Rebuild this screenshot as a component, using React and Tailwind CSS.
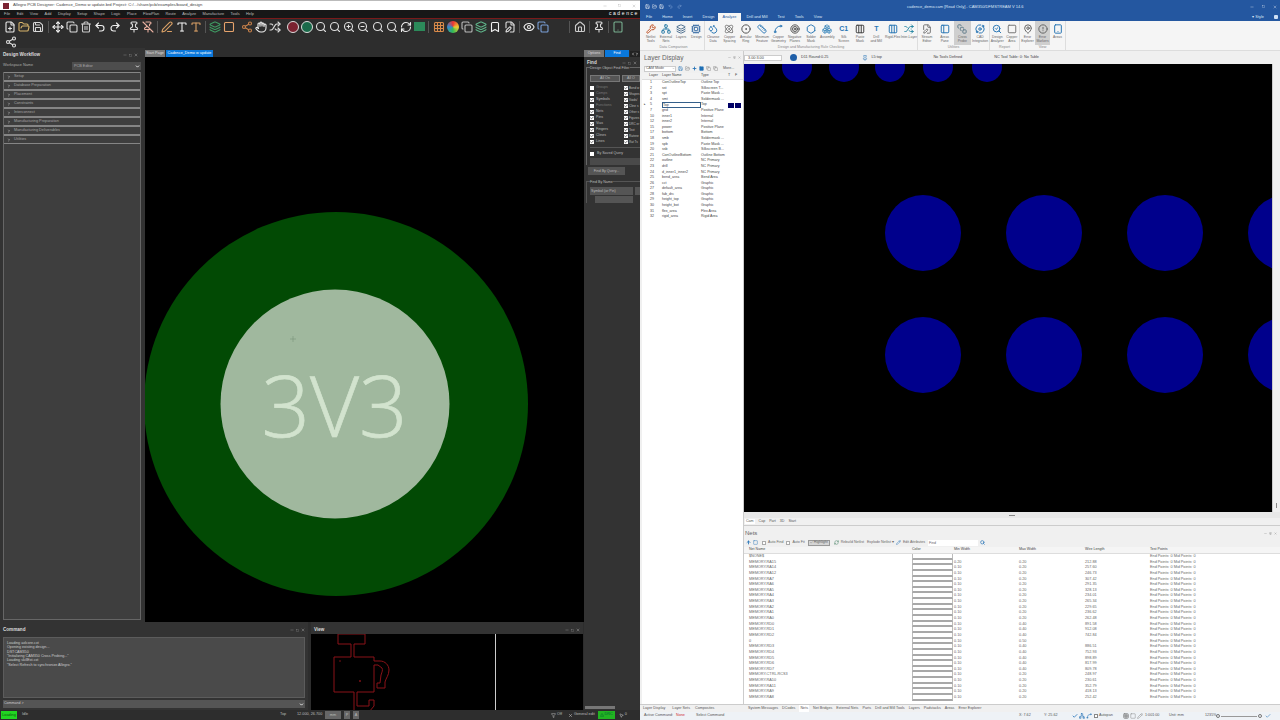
import React from 'react';
import {
  FilePlus, FolderOpen, Save, Move, Copy, Trash2, Undo2, Redo2, Pin, PinOff, PenLine, Type, Share2, Hand,
  ZoomIn, ZoomOut, Search, RefreshCw, Grid3x3, Eye, Home, ChevronRight, ChevronDown, ChevronLeft, X, Minus, Square, Layers, Plus,
  Wrench, Network, Cpu, Droplets, Atom, CircleDot, Ruler, Spline, Target, Hexagon, Boxes, Columns3, Shuffle, FilePen,
  PanelLeft, Orbit, SearchCheck, SquareStack, MapPin, CircleAlert, Tablet, Filter, Check, ArrowUp, Pencil, MousePointer2, TriangleAlert,
  Bookmark,
} from 'lucide-react';

const workflow = ['Setup', 'Database Preparation', 'Placement', 'Constraints', 'Interconnect', 'Manufacturing Preparation', 'Manufacturing Deliverables', 'Utilities'];
const menus = ['File', 'Edit', 'View', 'Add', 'Display', 'Setup', 'Shape', 'Logic', 'Place', 'FlowPlan', 'Route', 'Analyze', 'Manufacture', 'Tools', 'Help'];
const findLeft = [['Groups', 0], ['Comps', 0], ['Symbols', 1], ['Functions', 0], ['Nets', 1], ['Pins', 1], ['Vias', 1], ['Fingers', 1], ['Clines', 1], ['Lines', 1]];
const findRight = ['Bond w', 'Shapes', 'Voids/', 'Cline s', 'Other s', 'Figures', 'DRC er', 'Text', 'Ratsne', 'Rat Ts'];
const commandLog = ['Loading axlcore.cxt', 'Opening existing design...', 'DSTCAM350', '"Initializing CAM350 Cross Probing..."', 'Loading skillExt.cxt', '"Select Refresh to synchronize Allegro."'];
const layers = [
  ['1', 'ConOutlineTop', 'Outline Top'], ['2', 'sst', 'Silkscreen T...'], ['3', 'spt', 'Paste Mask ...'], ['4', 'smt', 'Soldermask ...'],
  ['5', 'Top', 'Top'], ['7', 'gnd', 'Positive Plane'], ['10', 'inner1', 'Internal'], ['12', 'inner2', 'Internal'],
  ['15', 'power', 'Positive Plane'], ['17', 'bottom', 'Bottom'], ['18', 'smb', 'Soldermask ...'], ['19', 'spb', 'Paste Mask ...'],
  ['20', 'ssb', 'Silkscreen B...'], ['21', 'ConOutlineBottom', 'Outline Bottom'], ['22', 'outline', 'NC Primary'], ['23', 'drill', 'NC Primary'],
  ['24', 'd_inner1_inner2', 'NC Primary'], ['25', 'bend_area', 'Bend Area'], ['26', 'cct', 'Graphic'], ['27', 'default_area', 'Graphic'],
  ['28', 'fab_drc', 'Graphic'], ['29', 'height_top', 'Graphic'], ['30', 'height_bot', 'Graphic'], ['31', 'flex_area', 'Flex Area'], ['32', 'rigid_area', 'Rigid Area'],
];
const nets = [
  ['$NONE$', '', '', ''], ['MEMORY.RA15', '0.20', '0.20', '212.88'], ['MEMORY.RA14', '0.10', '0.20', '257.60'], ['MEMORY.RA12', '0.10', '0.20', '246.73'],
  ['MEMORY.RA7', '0.10', '0.20', '307.42'], ['MEMORY.RA6', '0.10', '0.20', '291.35'], ['MEMORY.RA5', '0.10', '0.20', '328.13'], ['MEMORY.RA4', '0.10', '0.20', '234.01'],
  ['MEMORY.RA3', '0.10', '0.20', '265.34'], ['MEMORY.RA2', '0.10', '0.20', '229.65'], ['MEMORY.RA1', '0.10', '0.20', '236.62'], ['MEMORY.RA0', '0.10', '0.20', '262.48'],
  ['MEMORY.RD0', '0.10', '0.40', '891.58'], ['MEMORY.RD1', '0.10', '0.40', '912.08'], ['MEMORY.RD2', '0.10', '0.40', '742.84'], ['0', '0.10', '0.50', ''],
  ['MEMORY.RD3', '0.10', '0.40', '886.51'], ['MEMORY.RD4', '0.10', '0.40', '752.93'], ['MEMORY.RD5', '0.10', '0.40', '898.89'], ['MEMORY.RD6', '0.10', '0.40', '817.99'],
  ['MEMORY.RD7', '0.10', '0.40', '809.78'], ['MEMORY.CTRL.RCS3', '0.10', '0.20', '248.97'], ['MEMORY.RA10', '0.10', '0.20', '230.61'], ['MEMORY.RA11', '0.10', '0.20', '352.79'],
  ['MEMORY.RA9', '0.10', '0.20', '418.13'], ['MEMORY.RA8', '0.10', '0.20', '252.42'],
];
const ribbonTabs = ['File', 'Home', 'Insert', 'Design', 'Analyze', 'Drill and Mill', 'Test', 'Tools', 'View'];
const ribbonGroups = [
  { name: 'Data Comparison', w: 'w-[62px]', items: [[Wrench, '#c0562a', 'Netlist', 'Tools'], [Network, '#2f7fa8', 'External', 'Nets'], [Layers, '#4d6f8f', 'Layers', ''], [Cpu, '#3d6fa5', 'Design', '']] },
  { name: 'Design and Manufacturing Rule Checking', w: 'w-[213px]', items: [[Droplets, '#2c78b5', 'Cleanse', 'Data'], [Atom, '#7a7a7a', 'Copper', 'Spacing'], [CircleDot, '#555', 'Annular', 'Ring'], [Ruler, '#2c78b5', 'Minimum', 'Feature'], [Spline, '#2c78b5', 'Copper', 'Geometry'], [Target, '#555', 'Negative', 'Planes'], [Hexagon, '#2c78b5', 'Solder', 'Mask'], [Boxes, '#4a90c0', 'Assembly', ''], ['C1', '#2c78b5', 'Silk', 'Screen'], [Columns3, '#444', 'Paste', 'Mask'], ['T', '#555', 'Drill', 'and Mill'], [Columns3, '#2c78b5', 'Rigid-Flex', ''], [Shuffle, '#2c8aa5', 'Inter-Layer', '']] },
  { name: 'Utilities', w: 'w-[72px]', items: [[FilePen, '#777', 'Stream', 'Editor'], [PanelLeft, '#2c78b5', 'Areas', 'Pane'], [SquareStack, '#607d8b', 'Cross', 'Probe', true], [Orbit, '#2c78b5', 'CAD', 'Integration']] },
  { name: 'Report', w: 'w-[30px]', items: [[SearchCheck, '#2c78b5', 'Design', 'Analyzer'], [Square, '#777', 'Copper', 'Area']] },
  { name: 'View', w: 'w-[46px]', items: [[MapPin, '#666', 'Error', 'Explorer'], [CircleAlert, '#666', 'Error', 'Markers', true], [Tablet, '#2c78b5', 'Areas', '']] },
];
const statusTabs = ['System Messages', 'DCodes', 'Nets', 'Net Bridges', 'External Nets', 'Parts', 'Drill and Mill Tools', 'Layers', 'Padstacks', 'Areas', 'Error Explorer'];

function Tool({ icon: Icon, color = '#e5e5e5' }) {
  return <Icon size={12} color={color} strokeWidth={2.2} className="shrink-0" />;
}

function Sep() {
  return <div className="w-px h-3 bg-[#555] shrink-0 mx-[1px]" />;
}

function PaneHead({ title }) {
  return (
    <div className="flex items-center h-[8px] px-[3px] text-[4.6px] font-bold text-[#ddd] shrink-0">
      <span className="flex-1">{title}</span>
      <Minus size={4} color="#aaa" />
      <Square size={3} color="#aaa" className="mx-[2px]" />
      <X size={4} color="#ccc" />
    </div>
  );
}

function LeftToolbar() {
  const zoomIcons = [Search, Search, ZoomIn, ZoomOut, Search, Search];
  return (
    <div className="h-[29px] bg-[#2d2d2d] shrink-0 pl-[4px]">
      <div className="flex items-center gap-[2.2px] h-[15px]">
        <Tool icon={FilePlus} color="#e9e9e9" />
        <Tool icon={FolderOpen} color="#d7b36a" />
        <Tool icon={Save} color="#d8d8d8" />
        <Sep />
        <Tool icon={Move} color="#eee" />
        <Tool icon={Copy} color="#ddd" />
        <Tool icon={Trash2} color="#ccc" />
        <Tool icon={Undo2} color="#eee" />
        <Tool icon={Redo2} color="#eee" />
        <div className="w-[3px] shrink-0" />
        <Tool icon={Pin} color="#ddd" />
        <Tool icon={PinOff} color="#e8b0a0" />
        <Sep />
        <Tool icon={PenLine} color="#d9a066" />
        <Tool icon={Type} color="#eee" />
        <Tool icon={Type} color="#d9a066" />
        <Sep />
        <Tool icon={Layers} color="#3f9a62" />
        <Tool icon={Square} color="#e6a36c" />
        <div className="w-[1px] shrink-0" />
        <Tool icon={Share2} color="#c8814a" />
        <Tool icon={Hand} color="#eee" />
        <Tool icon={Shuffle} color="#ddd" />
        <div className="w-[1px] shrink-0" />
        <div className="w-[12px] h-[12px] rounded-full border border-[#ddd] bg-[#7a2230] shrink-0" />
        <div className="w-[12px] h-[12px] rounded-full border border-[#ddd] bg-[#1a6a4a] shrink-0" />
        {zoomIcons.map((Icon, i) => <Tool key={i} icon={Icon} color="#e0e0e0" />)}
        <Tool icon={RefreshCw} color="#eee" />
        <div className="w-[11px] h-[9px] bg-[#2c8a5a] shrink-0" />
        <Sep />
        <Tool icon={Grid3x3} color="#d98a4a" />
        <div className="w-[12px] h-[12px] rounded-full bg-[conic-gradient(#e33,#ec3,#3b5,#38c,#e33)] shrink-0" />
        <Tool icon={Copy} color="#bbb" />
        <Tool icon={Layers} color="#5fb48a" />
        <Tool icon={Bookmark} color="#eee" />
        <Tool icon={FilePen} color="#ddd" />
        <Sep />
        <Tool icon={Eye} color="#eee" />
        <Tool icon={Copy} color="#7aa0d8" />
        <div className="w-[15px] shrink-0" />
        <Sep />
        <Tool icon={Home} color="#ccc" />
        <Sep />
        <Tool icon={Pin} color="#ddd" />
        <Sep />
        <Tool icon={Tablet} color="#78b090" />
      </div>
      <div className="pt-[2px] pl-[1px]"><Tool icon={Share2} color="#ddd" /></div>
    </div>
  );
}

function FindCheck({ name, on, tight }) {
  return (
    <div className={`flex items-center h-[6px] whitespace-nowrap ${tight ? 'gap-[1px] text-[3.1px]' : 'gap-[2px]'}`}>
      <span className="w-[4px] h-[4px] bg-white shrink-0 flex items-center justify-center">
        {on ? <Check size={4} color="#222" strokeWidth={4} /> : null}
      </span>
      <span className={on ? '' : 'text-[#777]'}>{name}</span>
    </div>
  );
}

function FindPanel() {
  return (
    <div className="w-[56px] bg-[#333] text-[3.6px] text-[#bbb] flex flex-col shrink-0 overflow-hidden">
      <div className="flex h-[9px] text-[3.6px] items-end pt-[2px] shrink-0 bg-[#2d2d2d]">
        <span className="w-[20px] h-[7px] bg-[#777] text-[#ddd] text-center leading-[7px]">Options</span>
        <span className="w-[24px] h-[7px] bg-[#0a78dc] text-white text-center leading-[7px] ml-[1px]">Find</span>
        <span className="w-[10px] h-[6px] bg-[#222] ml-[1px] flex items-center justify-center">
          <ChevronLeft size={4} color="#ddd" strokeWidth={4} />
          <ChevronRight size={4} color="#ddd" strokeWidth={4} />
        </span>
      </div>
      <div className="h-[2px] shrink-0" />
      <PaneHead title="Find" />
      <div className="ml-[2px] border-l border-t border-[#666] pl-[3px] pb-[2px] h-[98px] shrink-0">
        <div className="-mt-[2px] mb-[5px] leading-[4px] bg-[#333] w-fit">Design Object Find Filter</div>
        <div className="flex gap-[2px] mb-[3px]">
          <div className="w-[30px] h-[7px] bg-[#555] border border-[#777] text-center leading-[5px] shrink-0">All On</div>
          <div className="flex-1 h-[7px] bg-[#555] border border-[#777] text-center leading-[5px]">All O</div>
        </div>
        <div className="flex">
          <div className="w-[34px] shrink-0">
            {findLeft.map(([name, on]) => <FindCheck key={name} name={name} on={on} />)}
          </div>
          <div className="min-w-0">
            {findRight.map((name) => <FindCheck key={name} name={name} on={1} tight />)}
          </div>
        </div>
        <div className="border-t border-[#555] mt-[2px] pt-[3px] flex items-center gap-[3px]">
          <span className="w-[4px] h-[4px] bg-white shrink-0" />
          By Saved Query
        </div>
        <div className="h-[7px] bg-[#4a4a4a] mt-[2px]" />
      </div>
      <div className="w-[37px] h-[8px] bg-[#555] ml-[4px] mt-[2px] text-center leading-[8px] shrink-0">Find By Query...</div>
      <div className="ml-[2px] mt-[6px] border-t border-l border-[#555] pl-[3px] shrink-0">
        <div className="-mt-[2px] mb-[3px] leading-[4px] bg-[#333] w-fit">Find By Name</div>
        <div className="flex gap-[2px]">
          <div className="w-[43px] h-[8px] bg-[#555] leading-[8px] pl-[1px] shrink-0">Symbol (or Pin)</div>
          <div className="flex-1 h-[8px] bg-[#555]" />
        </div>
        <div className="flex mt-[1px] pl-[5px]">
          <div className="w-[38px] h-[7px] bg-[#555] shrink-0" />
        </div>
      </div>
      <div className="flex-1" />
      <div className="h-[3px] w-[30px] bg-[#777] ml-[1px] mb-[1px] shrink-0" />
    </div>
  );
}

function LeftWindow() {
  return (
    <div className="w-[640px] h-[720px] flex flex-col bg-[#2d2d2d] shrink-0 overflow-hidden">
      <div className="h-[10px] bg-white flex items-center px-[3px] gap-[2px] text-[4.2px] text-[#444] shrink-0 border-t border-[#bbb]">
        <div className="w-[6px] h-[6px] bg-[#7b2233] shrink-0" />
        <span className="ml-[2px]">Allegro PCB Designer: Cadence_Demo w update.brd  Project: C:/.../share/pcb/examples/board_design</span>
        <span className="flex-1" />
        <Minus size={4} color="#999" />
        <Square size={3} color="#999" className="mx-[9px]" />
        <X size={4} color="#999" className="mr-[1px]" />
      </div>
      <div className="h-[8px] bg-[#171717] flex items-center pl-[4px] gap-[6.4px] text-[3.9px] text-[#bbb] shrink-0">
        {menus.map((m) => <span key={m}>{m}</span>)}
        <span className="flex-1" />
        <span className="text-[5px] tracking-[1.6px] text-white pr-[1px]">cadence</span>
      </div>
      <div className="h-px bg-[#7a1a1a] shrink-0" />
      <LeftToolbar />
      <div className="flex flex-1 min-h-0">
        <div className="w-[584px] flex flex-col shrink-0">
          <div className="flex h-[574px] shrink-0">
            <div className="w-[145px] flex flex-col shrink-0 pr-[4px] pt-[3px] bg-[#333]">
              <PaneHead title="Design Workflow" />
              <div className="flex items-center h-[11px] text-[3.8px] text-[#aaa] pl-[3px] pt-[3px] shrink-0">
                <span className="w-[69px]">Workspace Name</span>
                <div className="flex-1 h-[8px] bg-[#4d4d4d] pl-[2px] leading-[8px] flex items-center justify-between pr-[1px]">
                  PCB Editor
                  <ChevronDown size={5} color="#fff" strokeWidth={4} />
                </div>
              </div>
              <div className="ml-[3px] mt-[2px] flex-1 flex flex-col border-x border-b border-[#666] bg-[#3e3e3e] mb-[2px]">
                {workflow.map((w) => (
                  <div key={w} className="h-[9px] flex items-center border-t border-b border-[#858585] bg-[#3e3e3e] pl-[3px] gap-[3px] text-[3.8px] text-[#a5a5a5] shrink-0">
                    <ChevronRight size={4} color="#ddd" strokeWidth={3} />
                    {w}
                  </div>
                ))}
              </div>
            </div>
            <div className="flex-1 flex flex-col min-w-0">
              <div className="h-[9px] flex items-end text-[3.8px] shrink-0 bg-[#2d2d2d]">
                <span className="w-[20px] h-[7px] bg-[#777] text-[#ddd] text-center leading-[7px]">Start Page</span>
                <span className="w-[47px] h-[7px] bg-[#0a78dc] text-white text-center leading-[7px] ml-[1px]">Cadence_Demo w update</span>
              </div>
              <svg className="flex-1 min-h-0 w-full bg-black block" viewBox="145 57 439 565" preserveAspectRatio="none">
                <circle cx="336" cy="404" r="192" fill="#024a04" />
                <circle cx="335" cy="404" r="114.5" fill="#a0b89e" />
                <text x="334.5" y="436.5" textAnchor="middle" fontFamily="'Open Sans', sans-serif" fontWeight="300" fontSize="85" fill="#d2e3ce" stroke="#d2e3ce" strokeWidth="0.7">3V3</text>
                <path d="M293 336v6M290 339h6" stroke="#7f9a7f" strokeWidth="0.7" />
              </svg>
            </div>
          </div>
          <div className="flex flex-1 min-h-0 gap-[3px] pr-[1px]">
            <div className="w-[308px] flex flex-col shrink-0 bg-[#333]">
              <div className="h-[4px] shrink-0" />
              <PaneHead title="Command" />
              <div className="mx-[3px] mt-[3px] h-[61px] bg-[#4a4a4a] border border-[#5c5c5c] px-[3px] pt-[3px] text-[3.7px] leading-[4.35px] text-[#ccc] shrink-0">
                {commandLog.map((line) => <div key={line}>{line}</div>)}
              </div>
              <div className="mx-[3px] mt-[2px] h-[8px] bg-[#555] flex items-center justify-between px-[1px] text-[3.6px] text-[#ccc] shrink-0">
                Command &gt;
                <ChevronDown size={5} color="#fff" strokeWidth={4} />
              </div>
            </div>
            <div className="flex-1 flex flex-col min-w-0 bg-[#333]">
              <div className="h-[4px] shrink-0" />
              <PaneHead title="View" />
              <div className="flex-1 min-h-0 bg-black">
                <svg className="w-full h-full block" viewBox="0 0 272 76" preserveAspectRatio="none" fill="none">
                  <path d="M27 0h27v10H43v13h20v4h6c5 0 9 4 9 9 0 5-3 8-4 12v6h-8v-5h3l1-8c1-3 2-5 1-7l-4-3h-4v27H46v14h12v-6h5v6l-5 6H43V58H23V23h17V10H27z" stroke="#8a1218" strokeWidth="1" />
                  <circle cx="29" cy="27" r="0.8" fill="#8a1218" />
                  <circle cx="49" cy="47" r="0.9" fill="#8a1218" />
                  <path d="M184.5 0v76" stroke="#ccc" strokeWidth="1" />
                </svg>
              </div>
            </div>
          </div>
        </div>
        <FindPanel />
      </div>
      <div className="h-[10px] bg-[#2d2d2d] flex items-center text-[3.8px] text-[#bbb] shrink-0 relative">
        <div className="w-[16px] h-[8px] ml-[1px] bg-[#22d622] text-[#0a5a0a] text-center leading-[8px]">Loading</div>
        <span className="ml-[5px] w-[258px]">Idle</span>
        <span className="w-[17px]">Top</span>
        <span className="w-[28px]">12.000, 26.700</span>
        <span className="w-[16px] h-[8px] bg-[#666] text-center leading-[8px]">mm</span>
        <span className="w-[6px] h-[8px] bg-[#666] text-center leading-[8px] ml-[3px]">P</span>
        <span className="w-[6px] h-[8px] bg-[#666] text-center leading-[8px] ml-[3px]">A</span>
        <Filter size={5} color="#ddd" className="ml-[192px]" />
        <span className="ml-[1px]">Off</span>
        <X size={5} color="#ddd" className="ml-[6px]" />
        <span className="ml-[1px]">General edit</span>
        <span className="w-[17px] h-[8px] bg-[#22b422] text-[#063] ml-[3px] flex items-center justify-center gap-[1px]"><TriangleAlert size={4} color="#063" />DRC</span>
        <MousePointer2 size={5} color="#ddd" className="ml-[4px]" />
        <span className="ml-[1px]">0</span>
      </div>
    </div>
  );
}

function RibbonGroup({ group }) {
  return (
    <div className={`${group.w} flex flex-col border-r border-[#ddd] shrink-0`}>
      <div className="flex justify-around flex-1">
        {group.items.map(([Icon, color, l1, l2, active], i) => (
          <div key={i} className={`flex-1 flex flex-col items-center pt-[2px] text-[3.4px] leading-[4.2px] text-[#666] whitespace-nowrap min-w-0 ${active ? 'bg-[#cfcfcf]' : ''}`}>
            <div className="h-[11px] mb-[1px] flex items-center">
              {typeof Icon === 'string'
                ? <span className="text-[7px] font-bold leading-[10px] text-[#2c78b5]">{Icon}</span>
                : <Icon size={10} color={color} strokeWidth={2.4} />}
            </div>
            <span>{l1}</span>
            <span>{l2}</span>
          </div>
        ))}
      </div>
      <div className="h-[5px] text-center text-[3.6px] leading-[5px] text-[#888]">{group.name}</div>
    </div>
  );
}

function LayerPanel() {
  return (
    <div className="w-[102px] bg-white flex flex-col shrink-0 border-r border-[#ccc] overflow-hidden">
      <div className="h-[13px] flex items-center justify-between px-[2px] bg-[#f0f0f0] text-[6.5px] text-[#666] shrink-0">
        Layer Display
        <span className="flex items-center gap-[2px]">
          <Minus size={3} color="#777" />
          <Pin size={3} color="#777" />
          <X size={3} color="#777" />
        </span>
      </div>
      <div className="h-[9px] flex items-center gap-[2px] px-[2px] bg-[#f0f0f0] text-[3.6px] text-[#555] shrink-0">
        <div className="w-[32px] h-[6px] bg-white border border-[#ccc] flex items-center justify-between pl-[1px] shrink-0">CAM Mode<ChevronDown size={3} color="#666" /></div>
        <Save size={5} color="#1f6fb5" />
        <FolderOpen size={5} color="#777" />
        <Plus size={5} color="#1f6fb5" strokeWidth={4} />
        <Square size={5} color="#1f6fb5" fill="#1f6fb5" />
        <Copy size={5} color="#777" />
        <Copy size={5} color="#777" />
        <span className="ml-[3px]">More...</span>
      </div>
      <div className="flex h-[7px] items-end text-[3.6px] leading-[5.6px] text-[#444] bg-[#f2f2f2] border-b border-[#ddd] shrink-0">
        <span className="w-[7px] shrink-0" />
        <span className="w-[13px] shrink-0">Layer</span>
        <span className="w-[39px] shrink-0">Layer Name</span>
        <span className="w-[27px] shrink-0">Type</span>
        <span className="w-[7px] shrink-0">T</span>
        <span>F</span>
      </div>
      {layers.map(([num, name, type]) => {
        const selected = num === '5';
        return (
          <div key={num} className="flex h-[5.6px] items-center text-[3.6px] leading-[5.6px] text-[#444] shrink-0 whitespace-nowrap">
            <span className="w-[7px] shrink-0 pl-[2px] text-[3px]">{selected ? '▸' : ''}</span>
            <span className="w-[13px] shrink-0 pl-[1px]">{num}</span>
            <span className={`w-[39px] shrink-0 ${selected ? 'border border-[#345f8a] leading-[4px]' : ''}`}>{name}</span>
            <span className="w-[27px] shrink-0">{type}</span>
            {selected ? (
              <>
                <span className="w-[6px] h-[5px] bg-[#000066] shrink-0" />
                <span className="w-[6px] h-[5px] bg-[#000066] ml-[1px] shrink-0" />
              </>
            ) : null}
          </div>
        );
      })}
    </div>
  );
}

function CamCanvas() {
  const topRow = [750, 797, 844, 890, 938, 987];
  const bigX = [923, 1044, 1165, 1286];
  const bigY = [233, 355];
  return (
    <div className="h-[448px] flex shrink-0">
      <svg className="flex-1 min-w-0 h-full block bg-black" viewBox="744 64 528 448" preserveAspectRatio="none">
        {topRow.map((x) => <circle key={x} cx={x} cy="67" r="15" fill="#00008c" />)}
        {bigY.map((y) => bigX.map((x) => <circle key={`${x}-${y}`} cx={x} cy={y} r="38" fill="#00008c" />))}
      </svg>
      <div className="w-[8px] bg-[#f0f0f0] border-l border-[#ccc] shrink-0 flex items-end justify-center">
        <div className="w-[1px] h-[5px] bg-[#888] mb-[4px]" />
      </div>
    </div>
  );
}

function NetRow({ net }) {
  const [name, min, max, len] = net;
  return (
    <div className="flex h-[5.65px] items-center text-[3.8px] leading-[5.65px] text-[#666] shrink-0 whitespace-nowrap">
      <span className="w-[168px] pl-[5px] shrink-0">{name}</span>
      <span className="w-[41px] h-full bg-white border-x border-x-[#bbb] border-b-2 border-b-[#a8a8a8] shrink-0" />
      <span className="w-[66px] pl-[1px] shrink-0">{min}</span>
      <span className="w-[66px] shrink-0">{max}</span>
      <span className="w-[65px] shrink-0">{len}</span>
      <span>End Points: 0 Mid Points: 0</span>
    </div>
  );
}

function NetsPanel() {
  return (
    <div className="flex-1 min-h-0 flex flex-col bg-white overflow-hidden">
      <div className="h-[12px] bg-[#f0f0f0] flex items-center justify-between px-[1px] text-[6px] text-[#666] shrink-0 pt-[2px]">
        Nets
        <span className="flex items-center gap-[2px] pr-[2px]">
          <Minus size={3} color="#777" />
          <Pin size={3} color="#777" />
          <X size={3} color="#777" />
        </span>
      </div>
      <div className="h-[9px] bg-[#f0f0f0] flex items-center px-[2px] gap-[2px] text-[3.6px] text-[#666] shrink-0 whitespace-nowrap">
        <ArrowUp size={5} color="#1f6fb5" strokeWidth={4} />
        <Square size={5} color="#1f6fb5" />
        <span className="w-[4px] h-[4px] bg-white border border-[#aaa] ml-[2px]" />
        Auto Find
        <span className="w-[4px] h-[4px] bg-white border border-[#aaa] ml-[1px]" />
        Auto Fit
        <span className="h-[6px] flex items-center gap-[1px] bg-[#d5d5d5] border border-[#999] px-[1px] ml-[1px]"><Check size={3} color="#333" />Highlight</span>
        <RefreshCw size={5} color="#3a7a5a" className="ml-[2px]" />
        Rebuild Netlist
        <span className="ml-[1px]">Explode Netlist ▾</span>
        <Pencil size={5} color="#1f6fb5" />
        Edit Attributes
        <div className="w-[50px] h-[6px] bg-white pl-[1px] leading-[6px] ml-[1px]">Find</div>
        <Search size={5} color="#1f6fb5" strokeWidth={3} />
      </div>
      <div className="flex h-[7px] items-center text-[3.6px] leading-[5.6px] text-[#444] bg-[#f5f5f5] border-b border-[#ddd] shrink-0">
        <span className="w-[168px] pl-[5px] shrink-0">Net Name</span>
        <span className="w-[42px] shrink-0">Color</span>
        <span className="w-[65px] shrink-0">Min Width</span>
        <span className="w-[66px] shrink-0">Max Width</span>
        <span className="w-[65px] shrink-0">Wire Length</span>
        <span>Test Points</span>
      </div>
      {nets.map((n, i) => <NetRow key={i} net={n} />)}
    </div>
  );
}

function RightWindow() {
  return (
    <div className="w-[640px] h-[720px] flex flex-col bg-[#f0f0f0] shrink-0 overflow-hidden">
      <div className="h-[21px] bg-[#2457a0] flex flex-col shrink-0">
        <div className="h-[13px] flex items-center pl-[5px] text-[4px] text-[#dce6f5]">
          <Save size={5} color="#fff" />
          <FolderOpen size={5} color="#fff" className="ml-[2px]" />
          <Save size={5} color="#fff" className="ml-[2px]" />
          <Undo2 size={5} color="#8fb0dd" className="ml-[4px]" />
          <Redo2 size={5} color="#8fb0dd" className="ml-[4px]" />
          <span className="w-[225px]" />
          <span className="whitespace-nowrap">cadence_demo.cam [Read Only] - CAM350/DFMSTREAM V 14.6</span>
          <span className="flex-1" />
          <Minus size={4} color="#fff" />
          <Square size={3} color="#fff" className="mx-[8px]" />
          <X size={4} color="#fff" className="mr-[3px]" />
        </div>
        <div className="h-[8px] flex items-end pl-[6px] text-[3.9px] text-[#dce6f5]">
          {ribbonTabs.map((t) => (
            <span key={t} className={t === 'Analyze' ? 'h-[8px] bg-[#f5f5f5] text-[#2457a0] px-[5px] leading-[8px] mr-[5px]' : t === 'Design' ? 'leading-[8px] mr-[3px]' : 'leading-[8px] mr-[10px]'}>{t}</span>
          ))}
          <span className="flex-1" />
          <span className="leading-[6px] pb-[1px] mr-[10px]">▾ Style</span>
          <span className="w-[4px] h-[4px] bg-[#cfe0f5] rounded-[1px] mb-[2px] mr-[2px]" />
        </div>
      </div>
      <div className="h-[30px] bg-[#f5f5f5] border-b border-[#ddd] flex pl-[3px] shrink-0">
        {ribbonGroups.map((g) => <RibbonGroup key={g.name} group={g} />)}
      </div>
      <div className="flex flex-1 min-h-0 pl-[2px]">
        <LayerPanel />
        <div className="flex-1 min-w-0 flex flex-col">
          <div className="h-[13px] bg-[#f0f0f0] flex items-center text-[3.8px] text-[#444] shrink-0 whitespace-nowrap">
            <div className="w-[38px] h-[6px] bg-white border border-[#ccc] pl-[3px] leading-[4px] shrink-0">3.00:3.00</div>
            <span className="w-[7px] h-[7px] rounded-full bg-[#1f5fa8] ml-[8px]" />
            <span className="ml-[4px]">D11 Round:0.25</span>
            <Pin size={6} color="#1f6fb5" className="ml-[34px]" />
            <span className="ml-[3px] w-[56px]">L5:top</span>
            <span className="ml-[6px]">No Tools Defined</span>
            <span className="ml-[32px]">NC Tool Table: 0: No Table</span>
          </div>
          <CamCanvas />
          <div className="h-[6px] bg-[#e8e8e8] flex items-center justify-center shrink-0"><div className="w-[6px] h-px bg-[#888]" /></div>
          <div className="h-[8px] bg-[#f0f0f0] border-b border-[#ccc] flex items-center gap-[4px] pl-[1px] text-[3.6px] text-[#555] shrink-0">
            <span className="bg-white px-[1px]">Cam</span><span>Cap</span><span>Part</span><span>3D</span><span>Start</span>
          </div>
          <NetsPanel />
        </div>
      </div>
      <div className="h-[8px] bg-[#f0f0f0] border-t border-[#ccc] flex items-center text-[3.7px] text-[#555] shrink-0 whitespace-nowrap">
        <span className="ml-[3px]">Layer Display</span>
        <span className="ml-[7px]">Layer Sets</span>
        <span className="ml-[5px] w-[53px]">Composites</span>
        {statusTabs.map((t) => (
          <span key={t} className={t === 'Nets' ? 'bg-white px-[1px] mr-[4px] h-full leading-[7px]' : 'mr-[4px]'}>{t}</span>
        ))}
      </div>
      <div className="h-[8px] bg-[#eef2f6] flex items-center text-[3.7px] text-[#555] shrink-0 whitespace-nowrap">
        <span className="ml-[4px] w-[32px]">Active Command:</span>
        <span className="text-[#d03030] w-[20px]">None</span>
        <span className="w-[323px]">Select Command</span>
        <span className="w-[25px]">X: 7.62</span>
        <span className="w-[28px]">Y: 25.62</span>
        <Check size={6} color="#1f6fb5" strokeWidth={3} />
        <Network size={6} color="#1f6fb5" className="ml-[1px]" />
        <Spline size={6} color="#1f6fb5" className="ml-[1px]" />
        <span className="w-[4px] h-[4px] bg-white border border-[#888] ml-[2px]" />
        <span className="ml-[1px] w-[24px]">Autopan</span>
        <Grid3x3 size={6} color="#666" />
        <Square size={6} color="#888" className="ml-[1px]" />
        <Pencil size={6} color="#888" className="ml-[1px]" />
        <span className="ml-[2px] w-[24px]">1:001:00</span>
        <span className="w-[36px]">Unit: mm</span>
        <span className="w-[10px]">1235%</span>
        <span className="w-[4px] h-[4px] rounded-full border border-[#777] ml-[1px]" />
        <span className="w-[36px] h-px bg-[#999] mx-[1px]" />
        <span className="w-[4px] h-[4px] rounded-full border border-[#777]" />
        <Check size={6} color="#1f6fb5" className="ml-[3px]" />
      </div>
    </div>
  );
}

export default function App() {
  return (
    <div className="w-[1280px] h-[720px] flex overflow-hidden bg-white font-['Liberation_Sans',sans-serif]">
      <LeftWindow />
      <RightWindow />
    </div>
  );
}
